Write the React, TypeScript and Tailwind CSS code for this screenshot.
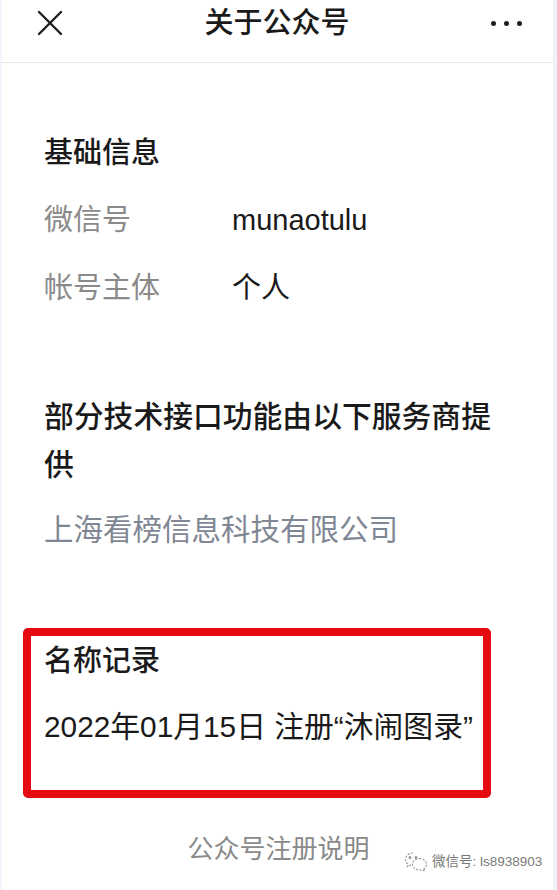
import React from "react";

const font = { fontFamily: '"Liberation Sans", "Noto Sans CJK SC", sans-serif' };

export default function App() {
  return (
    <div
      className="relative w-[557px] h-[890px] overflow-hidden bg-white flex"
      style={font}
    >
      <div className="w-[2px] bg-[#f2f5fb]" />
      <div className="flex-1 flex flex-col">
        {/* Header */}
        <div className="h-[63px] border-b border-[#e6e6e6] flex items-start">
          <div className="h-[46px] w-full flex items-center justify-between">
            <div className="ml-[35px] w-[26px] h-[26px] flex items-center justify-center">
              <svg width="26" height="26" viewBox="0 0 26 26">
                <path
                  d="M2 2 L24 24 M24 2 L2 24"
                  stroke="#1f1f1f"
                  strokeWidth="2.4"
                  strokeLinecap="round"
                  fill="none"
                />
              </svg>
            </div>
            <div className="text-[29px] leading-[40px] text-[#1a1a1a] font-medium">
              关于公众号
            </div>
            <div className="mr-[31px] flex items-center gap-[8px]">
              <span className="w-[5px] h-[5px] rounded-full bg-[#1f1f1f]" />
              <span className="w-[5px] h-[5px] rounded-full bg-[#1f1f1f]" />
              <span className="w-[5px] h-[5px] rounded-full bg-[#1f1f1f]" />
            </div>
          </div>
        </div>

        {/* 基础信息 */}
        <div className="ml-[42px] mt-[70px] text-[29px] leading-[40px] text-[#1a1a1a] font-medium">
          基础信息
        </div>
        <div className="ml-[42px] mt-[27px] flex text-[29px] leading-[40px]">
          <div className="w-[188px] text-[#8a8a8a]">微信号</div>
          <div className="text-[#1a1a1a]">munaotulu</div>
        </div>
        <div className="ml-[42px] mt-[28px] flex text-[29px] leading-[40px]">
          <div className="w-[188px] text-[#8a8a8a]">帐号主体</div>
          <div className="text-[#1a1a1a]">个人</div>
        </div>

        {/* 服务商 */}
        <div className="ml-[42px] mt-[85px] w-[470px] text-[29.8px] leading-[48px] text-[#1a1a1a] font-medium">
          部分技术接口功能由以下服务商提供
        </div>
        <div className="ml-[42px] mt-[21px] text-[29.5px] leading-[40px] text-[#7f8794]">
          上海看榜信息科技有限公司
        </div>

        {/* 名称记录 */}
        <div className="ml-[21px] mt-[78px] w-[468px] h-[170px] border-[8px] border-[#e60a12] rounded-[5px] pt-[5px] pl-[13px]">
          <div className="text-[29px] leading-[40px] text-[#1a1a1a] font-medium">
            名称记录
          </div>
          <div className="mt-[26px] text-[29.8px] leading-[40px] text-[#1a1a1a] whitespace-nowrap">
            2022年01月15日 注册“沐闹图录”
          </div>
        </div>

        <div className="mt-[31px] ml-[2px] text-center text-[26px] leading-[40px] text-[#8a8a8a]">
          公众号注册说明
        </div>
      </div>
      <div className="w-[4px] bg-[#edf2fb]" />

      {/* watermark */}
      <div className="absolute left-[404px] top-[851px] flex items-center gap-[4px] text-[13.5px] leading-[20px] text-[#7a7a7a]">
        <svg width="24" height="22" viewBox="0 0 24 22" fill="none" stroke="#9a9a9a" strokeWidth="1.2">
          <path d="M9 2 C4.5 2 1.5 5 1.5 8.3 C1.5 10.3 2.6 12 4.3 13.1 L3.6 15.6 L6.5 14.2 C7.3 14.4 8.1 14.5 9 14.5" strokeDasharray="2 1.5" />
          <path d="M15.5 7.5 C19.5 7.5 22.5 10.2 22.5 13.4 C22.5 15.1 21.6 16.6 20.2 17.6 L20.8 19.8 L18.3 18.6 C17.4 18.9 16.5 19 15.5 19 C11.5 19 8.5 16.4 8.5 13.2 C8.5 10.1 11.5 7.5 15.5 7.5 Z" strokeDasharray="2 1.5" />
          <circle cx="6" cy="6.5" r="0.9" fill="#9a9a9a" />
          <circle cx="12" cy="6.5" r="0.9" fill="#9a9a9a" />
        </svg>
        <span>微信号: ls8938903</span>
      </div>
    </div>
  );
}
